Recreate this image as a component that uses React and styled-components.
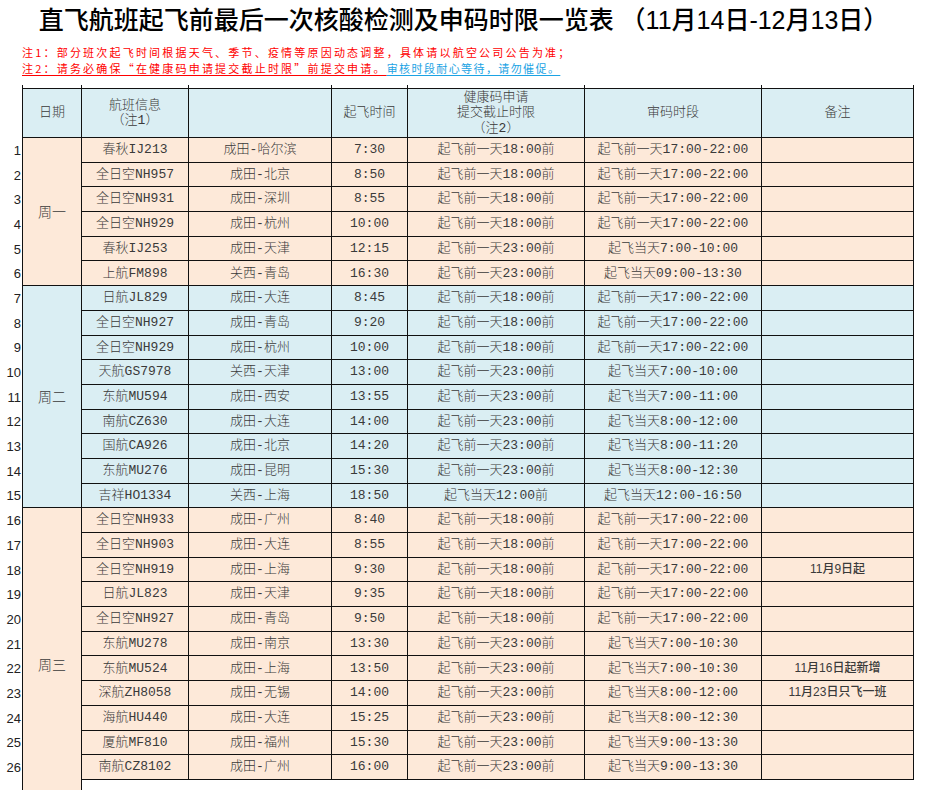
import React from "react";
import styled, { createGlobalStyle } from "styled-components";

const GlobalStyle = createGlobalStyle`
  html, body {
    margin: 0;
    padding: 0;
    background: #ffffff;
    overflow: hidden;
  }
  #root { width: 927px; }
`;

const BLUE = "#daeef3";
const PEACH = "#fde9d9";
const LINE = "#111";

const Page = styled.div`
  width: 927px;
  height: 790px;
  overflow: hidden;
  display: flex;
  flex-direction: column;
`;

const Title = styled.h1`
  margin: 0;
  height: 40px;
  line-height: 40px;
  text-align: center;
  font-family: "Liberation Sans", "Noto Sans CJK SC", sans-serif;
  font-size: 25px;
  font-weight: 500;
  color: #000;
  white-space: nowrap;
`;

const Notes = styled.div`
  margin: 4px 0 0 22px;
  font-family: "Noto Sans CJK SC", sans-serif;
  font-size: 11px;
  line-height: 16px;
`;

const NoteLine = styled.div`
  white-space: nowrap;
`;

const NoteText = styled.span`
  color: ${(p) => (p.$tone === "blue" ? "#1ba3e4" : "#ff0000")};
  letter-spacing: ${(p) => (p.$tone === "blue" ? "1.4px" : "2.2px")};
  text-decoration: ${(p) => (p.$underline ? "underline" : "none")};
  text-decoration-color: currentColor;
  text-underline-offset: 2px;
`;

const Sheet = styled.div`
  margin-top: 9px;
  display: grid;
  grid-template-columns: 22px 60px 107px 143px 76px 177px 177px 152px;
  grid-template-rows: 3px 50px repeat(26, 24.7px) 42px;
`;

const Placed = styled.div`
  grid-row: ${(p) => p.$row} / span ${(p) => p.$span || 1};
  grid-column: ${(p) => p.$col};
  box-sizing: border-box;
`;

const Tick = styled(Placed)`
  border-right: 1px solid ${LINE};
  border-left: ${(p) => (p.$first ? `1px solid ${LINE}` : "none")};
`;

const Cell = styled(Placed)`
  display: flex;
  flex-direction: column;
  align-items: center;
  justify-content: center;
  text-align: center;
  white-space: nowrap;
  color: #3a3a3a;
  font-family: "Liberation Mono", "Noto Sans CJK SC", monospace;
  font-size: 13px;
  font-weight: 300;
  line-height: 15.5px;
  background: ${(p) => p.$bg};
  border-right: 1px solid ${LINE};
  border-bottom: ${(p) => (p.$open ? "none" : `1px solid ${LINE}`)};
  border-left: ${(p) => (p.$first ? `1px solid ${LINE}` : "none")};
`;

const HeadCell = styled(Cell)`
  border-top: 1px solid ${LINE};
  background: ${BLUE};
`;

const DayCell = styled(Cell)`
  font-family: "Noto Sans CJK SC", sans-serif;
  font-size: 14px;
`;

const RemarkCell = styled(Cell)`
  font-family: "Liberation Sans", "Noto Sans CJK SC", sans-serif;
  font-size: 12px;
  font-weight: 500;
`;

const RowNum = styled(Placed)`
  display: flex;
  align-items: center;
  justify-content: flex-end;
  padding-right: 1px;
  font-family: "Liberation Sans", sans-serif;
  font-size: 13px;
  color: #222;
`;

const D18 = "起飞前一天18:00前";
const D23 = "起飞前一天23:00前";
const W17 = "起飞前一天17:00-22:00";

const rows = [
  ["春秋IJ213", "成田-哈尔滨", "7:30", D18, W17, ""],
  ["全日空NH957", "成田-北京", "8:50", D18, W17, ""],
  ["全日空NH931", "成田-深圳", "8:55", D18, W17, ""],
  ["全日空NH929", "成田-杭州", "10:00", D18, W17, ""],
  ["春秋IJ253", "成田-天津", "12:15", D23, "起飞当天7:00-10:00", ""],
  ["上航FM898", "关西-青岛", "16:30", D23, "起飞当天09:00-13:30", ""],
  ["日航JL829", "成田-大连", "8:45", D18, W17, ""],
  ["全日空NH927", "成田-青岛", "9:20", D18, W17, ""],
  ["全日空NH929", "成田-杭州", "10:00", D18, W17, ""],
  ["天航GS7978", "关西-天津", "13:00", D23, "起飞当天7:00-10:00", ""],
  ["东航MU594", "成田-西安", "13:55", D23, "起飞当天7:00-11:00", ""],
  ["南航CZ630", "成田-大连", "14:00", D23, "起飞当天8:00-12:00", ""],
  ["国航CA926", "成田-北京", "14:20", D23, "起飞当天8:00-11:20", ""],
  ["东航MU276", "成田-昆明", "15:30", D23, "起飞当天8:00-12:30", ""],
  ["吉祥HO1334", "关西-上海", "18:50", "起飞当天12:00前", "起飞当天12:00-16:50", ""],
  ["全日空NH933", "成田-广州", "8:40", D18, W17, ""],
  ["全日空NH903", "成田-大连", "8:55", D18, W17, ""],
  ["全日空NH919", "成田-上海", "9:30", D18, W17, "11月9日起"],
  ["日航JL823", "成田-天津", "9:35", D18, W17, ""],
  ["全日空NH927", "成田-青岛", "9:50", D18, W17, ""],
  ["东航MU278", "成田-南京", "13:30", D23, "起飞当天7:00-10:30", ""],
  ["东航MU524", "成田-上海", "13:50", D23, "起飞当天7:00-10:30", "11月16日起新增"],
  ["深航ZH8058", "成田-无锡", "14:00", D23, "起飞当天8:00-12:00", "11月23日只飞一班"],
  ["海航HU440", "成田-大连", "15:25", D23, "起飞当天8:00-12:30", ""],
  ["厦航MF810", "成田-福州", "15:30", D23, "起飞当天9:00-13:30", ""],
  ["南航CZ8102", "成田-广州", "16:00", D23, "起飞当天9:00-13:30", ""],
];

const days = [
  { label: "周一", start: 0, count: 6, bg: PEACH },
  { label: "周二", start: 6, count: 9, bg: BLUE },
  { label: "周三", start: 15, count: 12, bg: PEACH, open: true },
];

const headers = [
  ["日期"],
  ["航班信息", "（注1）"],
  [],
  ["起飞时间"],
  ["健康码申请", "提交截止时限", "（注2）"],
  ["审码时段"],
  ["备注"],
];

const bgFor = (i) => (i >= 6 && i < 15 ? BLUE : PEACH);

export default function App() {
  const BODY = 3; // grid row of first data row
  return (
    <Page>
      <GlobalStyle />
      <Title>直飞航班起飞前最后一次核酸检测及申码时限一览表 （11月14日-12月13日）</Title>
      <Notes>
        <NoteLine>
          <NoteText>注1：部分班次起飞时间根据天气、季节、疫情等原因动态调整，具体请以航空公司公告为准；</NoteText>
        </NoteLine>
        <NoteLine>
          <NoteText $underline>注2：请务必确保“在健康码申请提交截止时限”前提交申请。</NoteText>
          <NoteText $underline $tone="blue">审核时段耐心等待，请勿催促。</NoteText>
        </NoteLine>
      </Notes>
      <Sheet>
        {headers.map((_, c) => (
          <Tick key={`t${c}`} $row={1} $col={c + 2} $first={c === 0} />
        ))}
        {headers.map((lines, c) => (
          <HeadCell key={`h${c}`} $row={2} $col={c + 2} $first={c === 0}>
            {lines.map((l) => (
              <span key={l}>{l}</span>
            ))}
          </HeadCell>
        ))}
        {days.map((d) => (
          <DayCell
            key={d.label}
            $row={BODY + d.start}
            $span={d.count}
            $col={2}
            $first
            $bg={d.bg}
            $open={d.open}
          >
            {d.label}
          </DayCell>
        ))}
        {rows.map((r, i) => {
          const row = BODY + i;
          const bg = bgFor(i);
          return (
            <React.Fragment key={i}>
              <RowNum $row={row} $col={1}>{i + 1}</RowNum>
              {r.slice(0, 5).map((v, c) => (
                <Cell key={c} $row={row} $col={c + 3} $bg={bg}>
                  {v}
                </Cell>
              ))}
              <RemarkCell $row={row} $col={8} $bg={bg}>
                {r[5]}
              </RemarkCell>
            </React.Fragment>
          );
        })}
      </Sheet>
    </Page>
  );
}
